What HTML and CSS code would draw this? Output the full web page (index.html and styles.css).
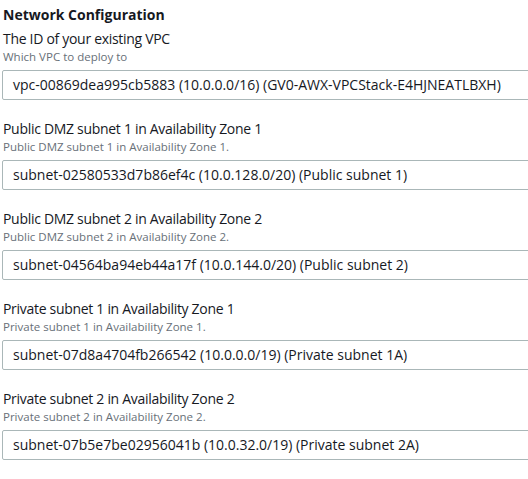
FILE: index.html
```html
<!DOCTYPE html>
<html>
<head>
<meta charset="utf-8">
<link rel="stylesheet" href="styles.css">
</head>
<body>
<div class="panel">
  <h2 class="title">Network Configuration</h2>
  <div class="field">
    <div class="label">The ID of your existing VPC</div>
    <div class="desc">Which VPC to deploy to</div>
    <div class="input">vpc-00869dea995cb5883 (10.0.0.0/16) (GV0-AWX-VPCStack-E4HJNEATLBXH)</div>
  </div>
  <div class="field">
    <div class="label">Public DMZ subnet 1 in Availability Zone 1</div>
    <div class="desc">Public DMZ subnet 1 in Availability Zone 1.</div>
    <div class="input">subnet-02580533d7b86ef4c (10.0.128.0/20) (Public subnet 1)</div>
  </div>
  <div class="field">
    <div class="label">Public DMZ subnet 2 in Availability Zone 2</div>
    <div class="desc">Public DMZ subnet 2 in Availability Zone 2.</div>
    <div class="input">subnet-04564ba94eb44a17f (10.0.144.0/20) (Public subnet 2)</div>
  </div>
  <div class="field">
    <div class="label">Private subnet 1 in Availability Zone 1</div>
    <div class="desc">Private subnet 1 in Availability Zone 1.</div>
    <div class="input">subnet-07d8a4704fb266542 (10.0.0.0/19) (Private subnet 1A)</div>
  </div>
  <div class="field">
    <div class="label">Private subnet 2 in Availability Zone 2</div>
    <div class="desc">Private subnet 2 in Availability Zone 2.</div>
    <div class="input">subnet-07b5e7be02956041b (10.0.32.0/19) (Private subnet 2A)</div>
  </div>
</div>
</body>
</html>
```
FILE: styles.css
```css
html, body {
  margin: 0;
  padding: 0;
  background: #ffffff;
  overflow: hidden;
}
body {
  font-family: "Open Sans", "Noto Sans", sans-serif;
  color: #16191f;
}
.panel {
  padding: 5px 0 0 3px;
  display: flex;
  flex-direction: column;
  gap: 19px;
}
.title {
  margin: 0;
  font-size: 14px;
  font-weight: 700;
  line-height: 20px;
  margin-bottom: -15px;
}
.field {
  display: flex;
  flex-direction: column;
}
.label {
  font-size: 14px;
  line-height: 20px;
  letter-spacing: -0.3px;
}
.desc {
  font-size: 11.5px;
  line-height: 15px;
  color: #687078;
}
.input {
  margin-top: 6px;
  margin-left: -1px;
  width: 560px;
  height: 30px;
  box-sizing: border-box;
  border: 1px solid #aab7b8;
  border-radius: 2px;
  padding: 0 10px;
  font-size: 14px;
  line-height: 28px;
  white-space: nowrap;
}
```
